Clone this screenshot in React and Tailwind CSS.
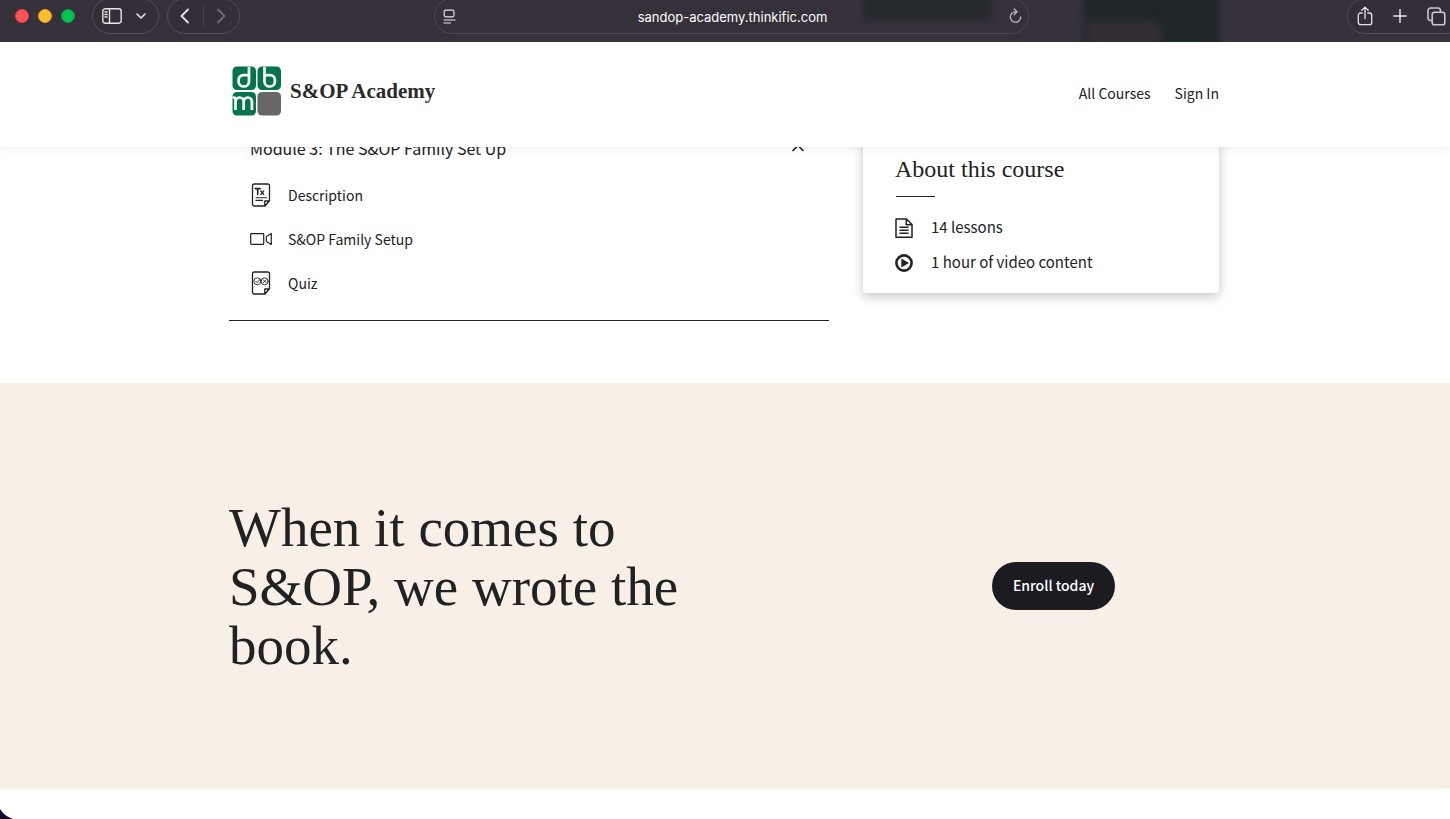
import React from "react";

const SANS = "font-['Noto_Sans_CJK_SC','Open_Sans',sans-serif]";
const SERIF = "font-['Liberation_Serif',serif]";

const line = {
  fill: "none",
  stroke: "currentColor",
  strokeLinecap: "round",
  strokeLinejoin: "round",
};

function BrowserBar() {
  return (
    <div className="relative z-20 flex h-[42px] shrink-0 items-start overflow-hidden bg-[#36313b] text-[#e6e4e8]">
      <div className="absolute -top-2 left-[863px] h-7 w-32 bg-[#20282a] blur-[3px]" />
      <div className="absolute -top-2 left-[1084px] h-14 w-[135px] bg-[#1e2628] blur-[3px]" />
      <div className="absolute top-5 left-[1086px] h-7 w-[76px] rounded-tr-xl bg-[#332e36] blur-[4px]" />

      <div className="relative -mt-0.5 flex h-9 w-[434px] shrink-0 items-center pl-[15px]">
        <div className="flex gap-[9px]">
          <span className="size-3.5 rounded-full border border-[#e0474c] bg-[#ff5257]" />
          <span className="size-3.5 rounded-full border border-[#e0a020] bg-[#ffbd2e]" />
          <span className="size-3.5 rounded-full border border-[#00a848] bg-[#00c350]" />
        </div>
        <div className="ml-[17px] flex h-9 w-[67px] items-center rounded-full border border-[#544b62] bg-[#352e39] pl-[9px]">
          <button aria-label="Show sidebar">
            <svg width="20" height="16" viewBox="0 0 20 16" {...line} strokeWidth="1.4">
              <rect x="0.8" y="0.8" width="18.4" height="14.4" rx="2.6" />
              <path d="M7.5 1v14M3 4h2M3 6.5h2M3 9h2" />
            </svg>
          </button>
          <button aria-label="Sidebar options" className="ml-3.5">
            <svg width="10" height="6" viewBox="0 0 10 6" {...line} strokeWidth="1.6">
              <path d="M1 1l4 4 4-4" />
            </svg>
          </button>
        </div>
        <div className="ml-2 flex h-9 w-[73px] items-center rounded-full border border-[#544b62] bg-[#352e39] pl-3">
          <button aria-label="Back">
            <svg width="10" height="16" viewBox="0 0 10 16" {...line} strokeWidth="1.8">
              <path d="M8 1.5L1.5 8 8 14.5" />
            </svg>
          </button>
          <span className="ml-[13px] h-5 w-px bg-[#494350]" />
          <button aria-label="Forward" className="ml-3 text-[#706a76]">
            <svg width="10" height="16" viewBox="0 0 10 16" {...line} strokeWidth="1.8">
              <path d="M2 1.5L8.500 8 2 14.500" />
            </svg>
          </button>
        </div>
      </div>

      <div className="relative -mt-0.5 flex h-9 flex-1 items-center justify-between rounded-full border border-[#4d465a] bg-[#352e39]/30 pr-1.5 pl-2">
        <button aria-label="Page settings">
          <svg width="13" height="15" viewBox="0 0 13 15" {...line} strokeWidth="1.2">
            <rect x="1.200" y="1.200" width="9.800" height="6.600" rx="1.500" />
            <path d="M1 11h11M1 14h6.500" />
          </svg>
        </button>
        <span className="pt-0.5 font-['Inter',sans-serif] text-[13px] leading-5 text-white">
          sandop-academy.thinkific.com
        </span>
        <button aria-label="Reload" className="text-[#b9b5bd]">
          <svg width="13" height="16" viewBox="0 0 13 16" {...line} strokeWidth="1.3">
            <path d="M6.500 3.800a5.200 5.200 0 1 0 5.200 5.200M5.200 1l2.800 2.800-2.800 2.900" />
          </svg>
        </button>
      </div>

      <div className="relative -mt-0.5 -mr-4 ml-[318px] flex h-9 w-[119px] shrink-0 items-center rounded-full border border-[#544b62] bg-[#352e39] pl-[9px]">
        <button aria-label="Share">
          <svg width="16" height="20" viewBox="0 0 16 20" {...line} strokeWidth="1.3">
            <path d="M5.200 7H3.500A2.200 2.200 0 0 0 1.300 9.200v7.300a2.200 2.200 0 0 0 2.200 2.200h9a2.200 2.200 0 0 0 2.200-2.200V9.200A2.200 2.200 0 0 0 12.500 7h-1.700M8 12.500V1.200M4.800 4.200L8 1.100l3.200 3.100" />
          </svg>
        </button>
        <button aria-label="New tab" className="ml-5">
          <svg width="14" height="14" viewBox="0 0 14 14" {...line} strokeWidth="1.5">
            <path d="M7 .8v12.400M.8 7h12.400" />
          </svg>
        </button>
        <button aria-label="Show tabs" className="ml-5 text-[#c9c5cd]">
          <svg width="19" height="19" viewBox="0 0 19 19" {...line} strokeWidth="1.600">
            <rect x="5.200" y="5.200" width="12.600" height="12.600" rx="2.400" />
            <path d="M5 13.500H3.400A2.400 2.400 0 0 1 1 11.100V3.400A2.400 2.400 0 0 1 3.400 1h7.700a2.400 2.400 0 0 1 2.400 2.400V5" />
          </svg>
        </button>
      </div>
    </div>
  );
}

function Logo() {
  return (
    <svg width="50" height="50" viewBox="0 0 50 50" aria-hidden="true">
      <g fill="#04754a">
        <rect x="0.5" y="0.500" width="23.500" height="23.500" rx="4.500" />
        <rect x="25.500" y="0.500" width="23.500" height="23.500" rx="4.500" />
        <rect x="0.500" y="26" width="23.500" height="23.500" rx="4.500" />
      </g>
      <rect x="25.500" y="26" width="23.500" height="23.500" rx="4.500" fill="#676767" />
      <g fill="none" stroke="#fff" strokeWidth="2.700">
        <path d="M17 1v14.500a5 5 0 0 1-5 5h-.7a4.700 4.700 0 0 1-4.700-4.700v-2A4.700 4.700 0 0 1 11.300 9.100H17" />
        <path d="M32.500 1v14.500a5 5 0 0 0 5 5h.7a4.700 4.700 0 0 0 4.700-4.700v-2a4.700 4.700 0 0 0-4.700-4.700h-5.700" />
        <path d="M.5 31.500h1a2 2 0 0 1 2 2V44M3.500 35.500a4 4 0 0 1 4-4h.2a4 4 0 0 1 4 4V44M11.700 35.500a4 4 0 0 1 4-4h.2a4 4 0 0 1 4 4V44" />
      </g>
    </svg>
  );
}

const pageOutline =
  "M3.300 1h13.400A1.800 1.800 0 0 1 18.500 2.800v15L14 23H3.300A1.800 1.800 0 0 1 1.500 21.200V2.800A1.800 1.800 0 0 1 3.300 1zM18.300 18h-4.500v4.800";

function TextIcon() {
  return (
    <svg width="22" height="24" viewBox="-1 0 22 24" {...line} strokeWidth="1.300">
      <path d={pageOutline} />
      <path d="M4.200 5.600h5M6.700 5.600v6" strokeWidth="1.600" />
      <path d="M9.800 8l3 3.600M12.800 8l-3 3.600" strokeWidth="1.200" />
      <path d="M5 14.700h10.500M5 17.400h6.500" strokeWidth="1.100" />
    </svg>
  );
}

function VideoIcon() {
  return (
    <svg width="22" height="24" viewBox="0 0 22 24" {...line} strokeWidth="1.200">
      <rect x="0.700" y="6.700" width="13" height="10.600" rx="0.800" />
      <path d="M21.300 6.500v11l-3.200-1.900c-.9-.6-1.800-.9-1.800-1.900v-3.400c0-1 .9-1.300 1.800-1.900z" />
    </svg>
  );
}

function QuizIcon() {
  return (
    <svg width="22" height="24" viewBox="-1 0 22 24" {...line} strokeWidth="1.300">
      <path d={pageOutline} />
      <g strokeWidth="0.900">
        <circle cx="6.300" cy="10.300" r="3.500" />
        <circle cx="13.700" cy="10.300" r="3.500" />
        <path d="M4.700 10.300l1.300 1.400 3.300-3.600M12.300 8.900l2.800 2.800M15.100 8.900l-2.800 2.800" />
      </g>
    </svg>
  );
}

const lessons = [
  { title: "Description", Icon: TextIcon },
  { title: "S&OP Family Setup", Icon: VideoIcon },
  { title: "Quiz", Icon: QuizIcon },
];

export default function App() {
  return (
    <div className={`relative flex min-h-screen flex-col overflow-hidden bg-white text-[#202223] ${SANS}`}>
      <BrowserBar />

      <header className="relative z-10 bg-white shadow-[0_0_10px_rgba(0,0,0,0.09)]">
        <div className="mx-auto flex h-[105px] max-w-[992px] items-center justify-between pr-0.5 pb-1 pl-[3px]">
          <a href="#" className="-mt-1 flex items-center gap-2">
            <Logo />
            <span className={`${SERIF} text-[21px] leading-7 font-bold text-[#2b2b2b]`}>S&amp;OP Academy</span>
          </a>
          <nav className="flex gap-6 text-sm leading-5">
            <a href="#">All Courses</a>
            <a href="#">Sign In</a>
          </nav>
        </div>
      </header>

      <main>
        <section className="mx-auto -mt-4 flex max-w-[992px] items-start justify-between pr-0.5 pb-[62px]">
          <div className="w-[600px] border-b border-[#202223] pb-[15px]">
            <div className="flex h-[34px] items-center justify-between pr-6 pl-[21px]">
              <h2 className="text-base leading-6">Module 3: The S&amp;OP Family Set Up</h2>
              <button aria-label="Collapse module">
                <svg width="14" height="8" viewBox="0 0 14 8" {...line} strokeWidth="1.700">
                  <path d="M2 6.500L7 1.500l5 5" />
                </svg>
              </button>
            </div>
            <ul className="mt-2">
              {lessons.map(({ title, Icon }) => (
                <li key={title} className="flex h-11 items-center gap-4 pl-[21px] text-sm">
                  <Icon />
                  <span>{title}</span>
                </li>
              ))}
            </ul>
          </div>

          <aside className="w-[356px] rounded bg-white px-8 pt-6 pb-[13px] shadow-[0_4px_12px_rgba(0,0,0,0.22)]">
            <h2 className={`${SERIF} text-2xl leading-7`}>About this course</h2>
            <div className="mt-[13px] ml-px h-px w-[39px] bg-[#202223]" />
            <ul className="mt-[13px] text-[15px]">
              <li className="flex h-[35px] items-center gap-[18px]">
                <svg width="18" height="20" viewBox="0 0 18 20" {...line} strokeWidth="1.500">
                  <path d="M1 1h10.500L17 6.500V19.200H1zM11.300 1.200v5.500H17M5 9.300h8M5 12.300h8M5 15.300h8" />
                </svg>
                <span>14 lessons</span>
              </li>
              <li className="flex h-[35px] items-center gap-[18px]">
                <svg width="18" height="18" viewBox="0 0 18 18">
                  <circle cx="9" cy="9" r="7.600" fill="none" stroke="currentColor" strokeWidth="2.600" />
                  <path d="M6.300 4.600L14 9l-7.700 4.400z" fill="currentColor" />
                </svg>
                <span>1 hour of video content</span>
              </li>
            </ul>
          </aside>
        </section>

        <section className="bg-[#f8efe6]">
          <div className="mx-auto flex h-[406px] max-w-[992px] items-center justify-between pr-[106px]">
            <h1 className={`${SERIF} w-[500px] text-[55px] leading-[59px]`}>
              When it comes to S&amp;OP, we wrote the book.
            </h1>
            <button className="h-12 w-[123px] rounded-full bg-[#1c1b22] pb-0.5 text-sm font-medium text-white">
              Enroll today
            </button>
          </div>
        </section>
      </main>

      <svg className="absolute bottom-0 left-0" width="13" height="10" viewBox="0 0 13 10" aria-hidden="true">
        <path d="M0 0Q4 7 13 10H0z" fill="#160a2c" />
      </svg>
    </div>
  );
}
